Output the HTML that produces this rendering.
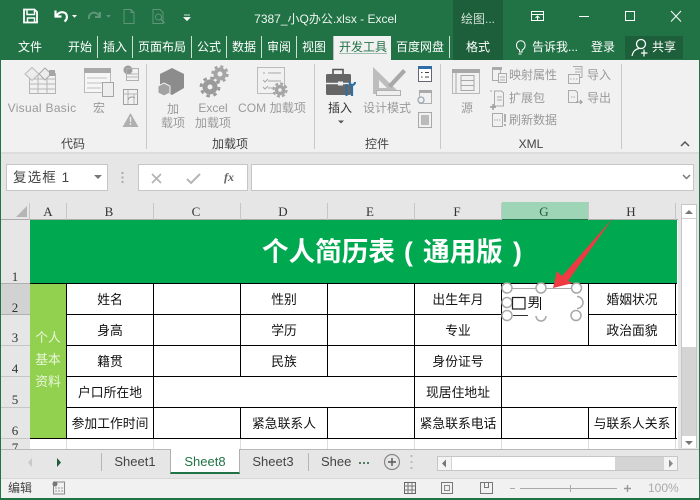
<!DOCTYPE html>
<html><head><meta charset="utf-8"><style>
html,body{margin:0;padding:0;width:700px;height:500px;overflow:hidden;background:#217346}
*{box-sizing:border-box}
#p{position:relative;width:700px;height:500px;overflow:hidden;font-family:"Liberation Sans","Noto Sans CJK SC",sans-serif;font-size:12px;color:#222}
.a{position:absolute}
.t{position:absolute;white-space:nowrap;text-align:center;line-height:16px}
.w{color:#fff}.g{color:#9a9a9a}.d{color:#444}
.h{position:absolute;top:203px;height:17px;font:13px/17px "Liberation Serif",serif;text-align:center;color:#333}
.r{position:absolute;left:1px;width:28px;text-align:center;font:13px/16px "Liberation Serif",serif;color:#333}
.c{position:absolute;text-align:center;font-size:12.8px;line-height:33px;color:#111;white-space:nowrap}
.l{position:absolute;background:#000}
.sep{position:absolute;width:1px;background:#c8c8c8}
.tb{position:absolute;top:38px;height:20px;line-height:19px;font-size:12px;color:#fff;text-align:center;white-space:nowrap}
.ti{position:absolute;top:221px;height:63px;line-height:63px;color:#fff;font-weight:bold;font-size:26.6px;white-space:nowrap}
</style></head><body><div id="p">

<!-- ribbon background -->
<div class="a" style="left:1px;top:60px;width:698px;height:93px;background:#f1f1f1"></div>
<div class="a" style="left:1px;top:153px;width:698px;height:50px;background:#e6e6e6"></div>
<div class="a" style="left:1px;top:152px;width:698px;height:2px;background:#dcdcdc"></div>

<!-- title bar -->
<div class="a" style="left:453px;top:0;width:50px;height:60px;background:#1c5f3a"></div>
<div class="a" style="left:625px;top:36px;width:58px;height:23px;background:#1c5f3a"></div>
<div class="t" style="left:253px;top:11px;width:145px;font-size:12px;color:#fff;opacity:.92">7387_小Q办公.xlsx - Excel</div>
<div class="t" style="left:458px;top:11px;width:40px;color:#cfe0d6;font-size:12px">绘图...</div>

<svg class="a" style="left:0;top:0" width="700" height="60" fill="none">
<path d="M24 9.500h10.500l2.500 2.500v10.500h-13z" stroke="#fff" stroke-width="1.800"/>
<path d="M27 10v4.500h7.500V10M27.500 22.500v-4.500h7v4.500" stroke="#fff" stroke-width="1.500"/>
<path d="M55.500 10.500v6h6M56 16c2-3 5-4.500 8-3.500 3.500 1 4 6.500.5 9" stroke="#fff" stroke-width="2.200"/>
<path d="M72 15h5l-2.500 2.800z" fill="#fff"/>
<path d="M100 12v5h-5M99.500 16c-2-3-5-4-7.500-3-2.500 1-3.500 3.500-3 6" stroke="#5f9578" stroke-width="2"/>
<path d="M106 15h5l-2.500 2.800z" fill="#5f9578"/>
<path d="M124 9.500h7l3 3v11h-10zM131 9.500v3h3" stroke="#5f9578"/>
<path d="M153 9.500h7l3 3v11h-10z" stroke="#5f9578"/><circle cx="158.500" cy="17" r="3" stroke="#5f9578"/><path d="M161 19.500l3.500 3.500" stroke="#5f9578" stroke-width="1.400"/>
<path d="M184 15h6M184 17.500h6l-3 3z" stroke="#fff" fill="#fff" stroke-width=".8"/>
<path d="M531.500 11.500h12v9h-12zM531.500 14.500h12M537.500 20v-4M535.500 18l2-2 2 2" stroke="#fff"/>
<path d="M579 16.500h10" stroke="#fff"/>
<rect x="625.500" y="11.500" width="9" height="9" stroke="#fff"/>
<path d="M671 11l10 10.500M681 11l-10 10.500" stroke="#fff"/>
<path d="M519.500 52v-2c-2-1-3-3-3-5a4.300 4.300 0 0 1 8.600 0c0 2-1 4-3 5v2zM518.500 54h3" stroke="#fff"/>
<circle cx="641" cy="44" r="4.500" stroke="#fff" stroke-width="1.300"/>
<path d="M632 56c1-5 4-7 7-7.500M644 49.500v7M641 53h6.500" stroke="#fff" stroke-width="1.200"/>
</svg>

<!-- tabs -->
<div class="tb" style="left:10px;width:40px">文件</div>
<div class="tb" style="left:64px;width:32px">开始</div>
<div class="tb" style="left:99px;width:32px">插入</div>
<div class="tb" style="left:134px;width:56px">页面布局</div>
<div class="tb" style="left:193px;width:32px">公式</div>
<div class="tb" style="left:228px;width:32px">数据</div>
<div class="tb" style="left:263px;width:32px">审阅</div>
<div class="tb" style="left:298px;width:32px">视图</div>
<div class="a" style="left:333px;top:36px;width:58px;height:24px;background:#f1f1f1;border-left:1px solid #bbb"></div>
<div class="tb" style="left:335px;width:56px;color:#217346;text-decoration:underline;text-decoration-color:#9fbfac;text-underline-offset:2px">开发工具</div>
<div class="tb" style="left:395px;width:50px">百度网盘</div>
<div class="tb" style="left:458px;width:40px">格式</div>
<div class="tb" style="left:530px;width:50px;color:#fff">告诉我...</div>
<div class="tb" style="left:588px;width:30px">登录</div>
<div class="tb" style="left:650px;width:28px">共享</div>
<div class="a" style="left:97px;top:36px;width:1px;height:22px;background:#cfe0d6"></div>
<div class="a" style="left:132px;top:36px;width:1px;height:22px;background:#cfe0d6"></div>
<div class="a" style="left:191px;top:36px;width:1px;height:22px;background:#cfe0d6"></div>
<div class="a" style="left:226px;top:36px;width:1px;height:22px;background:#cfe0d6"></div>
<div class="a" style="left:261px;top:36px;width:1px;height:22px;background:#cfe0d6"></div>
<div class="a" style="left:296px;top:36px;width:1px;height:22px;background:#cfe0d6"></div>
<div class="a" style="left:449px;top:36px;width:1px;height:22px;background:#cfe0d6"></div>

<!-- ribbon separators -->
<div class="sep" style="left:146px;top:64px;height:85px"></div>
<div class="sep" style="left:314px;top:64px;height:85px"></div>
<div class="sep" style="left:440px;top:64px;height:85px"></div>
<div class="sep" style="left:621px;top:64px;height:85px"></div>

<!-- ribbon icons -->
<svg class="a" style="left:0;top:60px" width="700" height="93" fill="none">
<!-- VB -->
<path d="M29.500 13.500h26v20h-26zM29.500 19h26M29.500 24h26M29.500 29h26M38 13.500v20M47 13.500v20" stroke="#b5b5b5"/>
<path d="M25 14l7-6.500 7 6.500-7 6.500z" fill="#ececec" stroke="#b8b8b8"/>
<path d="M39 14l6-6 6 6-6 6z" fill="#ececec" stroke="#a8a8a8"/>
<rect x="49" y="10" width="6" height="6" fill="#a5a5a5"/>
<!-- macro -->
<rect x="84.500" y="8.500" width="26" height="24" fill="#f6f6f6" stroke="#bbb"/>
<rect x="84" y="8" width="27" height="5" fill="#a9a9a9"/>
<path d="M87 18h20M87 23h20M87 28h14" stroke="#c0c0c0"/>
<rect x="102.500" y="22.500" width="11" height="14" fill="#eee" stroke="#a5a5a5"/>
<circle cx="128" cy="10" r="4.500" fill="#9c9c9c"/>
<rect x="126.500" y="8.500" width="12" height="12" stroke="#b0b0b0"/>
<path d="M127 14h12M127 17h12" stroke="#b5b5b5"/>
<rect x="123.500" y="29.500" width="14" height="15" stroke="#a0a0a0"/>
<path d="M124 34h14M128 30v14M134 34v10" stroke="#b5b5b5"/>
<path d="M128 40c1-3 4-4 7-2" stroke="#999"/>
<path d="M130.500 53l8 14h-16z" fill="#b0b0b0"/><path d="M130.500 57v5M130.500 63v2" stroke="#eee" stroke-width="1.300"/>
<!-- add-in -->
<path d="M172 8l12 6v14l-12 7-12-7V14z" fill="#8c8c8c"/>
<path d="M164 23l6 3v7l-6 3-6-3v-7z" fill="#a2a2a2" stroke="#f1f1f1"/>
<!-- gears -->
<circle cx="220" cy="14" r="4.500" stroke="#a5a5a5" stroke-width="4"/>
<circle cx="220" cy="14" r="7.500" stroke="#a5a5a5" stroke-width="2.500" stroke-dasharray="3 2.900"/>
<circle cx="210" cy="27" r="5" stroke="#9a9a9a" stroke-width="5"/>
<circle cx="210" cy="27" r="9" stroke="#9a9a9a" stroke-width="2.800" stroke-dasharray="3.500 3.560"/>
<!-- COM -->
<path d="M257.500 7.500h27v26h-27z" stroke="#bbb"/>
<path d="M263 13h2M268 13h13M263 20l2 2 3-3M268 21h13M263 27l2 2 3-3M268 28h6" stroke="#a8a8a8"/>
<circle cx="280" cy="30" r="3.500" stroke="#a5a5a5" stroke-width="3.500"/>
<circle cx="280" cy="30" r="6.500" stroke="#a5a5a5" stroke-width="2.200" stroke-dasharray="3 2.100"/>
<!-- Insert toolbox -->
<path d="M333 14V9.500h10V14" stroke="#555" stroke-width="1.600"/>
<rect x="326" y="14" width="25" height="21" rx="1.500" fill="#666"/>
<path d="M326 23.500h25" stroke="#f1f1f1" stroke-width="1.500"/>
<rect x="338" y="21.500" width="5" height="4" fill="#eee"/>
<path d="M349.500 22c0 4 5.500 4 5.500 0M352 25v11" stroke="#2a6fa8" stroke-width="2.200"/>
<path d="M346.500 24v12" stroke="#2a6fa8" stroke-width="2"/>
<!-- design -->
<path d="M373 7l28 27h-28z" fill="#bdbdbd"/>
<path d="M379 20l8 8h-8z" fill="#f1f1f1"/>
<path d="M388 25l15-16 3 3-15 16z" fill="#a8a8a8"/>
<rect x="376.500" y="30.500" width="24" height="5" fill="#eee" stroke="#b0b0b0"/>
<!-- small controls -->
<rect x="418.500" y="6.500" width="13" height="15" fill="#fff" stroke="#667"/>
<rect x="418" y="6" width="14" height="3" fill="#2f6da8"/>
<path d="M421 12.500h1.500M425 12.500h4M421 17h1.500M425 17h4" stroke="#444"/>
<rect x="419.500" y="30.500" width="12" height="13" stroke="#b0b0b0"/><rect x="419" y="30" width="13" height="3" fill="#aaa"/>
<circle cx="421" cy="40" r="3" fill="#f1f1f1" stroke="#9aaab5" stroke-width="1.300"/>
<rect x="418.500" y="52.500" width="13" height="15" stroke="#a8a8a8"/><rect x="421" y="55" width="8" height="10" fill="#bbb"/>
<!-- source -->
<rect x="452.500" y="9.500" width="27" height="24" stroke="#b8b8b8"/><rect x="452" y="9" width="28" height="4" fill="#a8a8a8"/>
<path d="M456 9v24M461 15.500h13v5h-13zM461 20.500h13v5h-13zM461 25.500h13v5h-13z" stroke="#a8a8a8"/>
<!-- xml small -->
<rect x="492.500" y="7.500" width="8" height="13" stroke="#aaa"/><rect x="492" y="7" width="10" height="3" fill="#aaa"/>
<rect x="498.500" y="13.500" width="8" height="9" fill="#f1f1f1" stroke="#aaa"/><path d="M500 17h5M500 20h5" stroke="#aaa"/>
<rect x="568.500" y="14.500" width="11" height="9" stroke="#aaa"/><path d="M573 6.500h9v11h-2" stroke="#aaa"/><path d="M570 19h8" stroke="#aaa" stroke-dasharray="1.500 1.500"/><path d="M575 9h6M575 12h6" stroke="#aaa"/>
<path d="M494.500 31h7l2 2v13h-9z" stroke="#aaa"/><path d="M490 31h2" stroke="#aaa"/><path d="M497 37h5M497 40h5" stroke="#aaa"/><path d="M490 47h6M493 44v6" stroke="#999" stroke-width="1.400"/>
<path d="M568.500 30.500h7l2 2v10h-9z" stroke="#aaa"/><path d="M571 37h5" stroke="#aaa" stroke-dasharray="1.500 1"/><path d="M576 42h6l-2-2M582 42l-2 2" stroke="#999"/>
<rect x="492.500" y="53.500" width="10" height="13" stroke="#aaa"/><path d="M494 60h7" stroke="#aaa" stroke-dasharray="1.500 1"/><path d="M505 54v8M505 64v2" stroke="#999" stroke-width="1.500"/>
<!-- collapse + dropdown -->
<path d="M681 86l4-4 4 4" stroke="#555" stroke-width="1.500"/>
<path d="M338 60.500h6l-3 3z" fill="#555"/>
</svg>

<!-- ribbon text -->
<div class="t g" style="left:2px;top:100px;width:80px;font-size:12px;letter-spacing:.3px">Visual Basic</div>
<div class="t g" style="left:88px;top:100px;width:22px">宏</div>
<div class="t g" style="left:158px;top:101px;width:30px">加</div>
<div class="t g" style="left:158px;top:115px;width:30px">载项</div>
<div class="t g" style="left:192px;top:100px;width:42px">Excel</div>
<div class="t g" style="left:192px;top:115px;width:42px">加载项</div>
<div class="t g" style="left:236px;top:100px;width:72px;letter-spacing:.1px">COM 加载项</div>
<div class="t" style="left:325px;top:100px;width:30px;color:#333">插入</div>
<div class="t g" style="left:361px;top:100px;width:52px">设计模式</div>
<div class="t g" style="left:455px;top:100px;width:24px">源</div>
<div class="t g" style="left:508px;top:67px;width:50px">映射属性</div>
<div class="t g" style="left:586px;top:67px;width:26px">导入</div>
<div class="t g" style="left:508px;top:90px;width:38px">扩展包</div>
<div class="t g" style="left:586px;top:90px;width:26px">导出</div>
<div class="t g" style="left:508px;top:112px;width:50px">刷新数据</div>
<div class="t d" style="left:58px;top:136px;width:30px">代码</div>
<div class="t d" style="left:210px;top:136px;width:40px">加载项</div>
<div class="t d" style="left:362px;top:136px;width:30px">控件</div>
<div class="t d" style="left:510px;top:136px;width:42px">XML</div>

<!-- formula bar -->
<div class="a" style="left:6px;top:164px;width:102px;height:27px;background:#fff;border:1px solid #c6c6c6"></div>
<div class="t" style="left:13px;top:170px;font-size:13.500px;color:#444;letter-spacing:1.100px">复选框 1</div>
<svg class="a" style="left:0;top:155px" width="700" height="50" fill="none">
<path d="M94 20h8l-4 4z" fill="#777"/>
<path d="M122.500 17v2M122.500 21.500v2M122.500 26v2" stroke="#aaa" stroke-width="2"/>
</svg>
<div class="a" style="left:138px;top:164px;width:110px;height:27px;background:#fff;border:1px solid #c6c6c6"></div>
<svg class="a" style="left:0;top:155px" width="700" height="50" fill="none">
<path d="M152 19l9 9M161 19l-9 9" stroke="#b5b5b5" stroke-width="1.800"/>
<path d="M187 24l4 4 9-9" stroke="#b5b5b5" stroke-width="2"/>
</svg>
<div class="t" style="left:222px;top:169px;width:14px;font:italic bold 12px/16px 'Liberation Serif',serif;color:#666">fx</div>
<div class="a" style="left:251px;top:164px;width:443px;height:27px;background:#fff;border:1px solid #c6c6c6"></div>
<svg class="a" style="left:680px;top:172px" width="14" height="12" fill="none"><path d="M3 3l3.500 3.500L10 3" stroke="#777" stroke-width="1.500"/></svg>

<!-- grid base -->
<div class="a" style="left:1px;top:203px;width:680px;height:246px;background:#e6e6e6"></div>
<div class="a" style="left:30px;top:220px;width:648px;height:229px;background:#fff"></div>
<div class="a" style="left:1px;top:219px;width:677px;height:1px;background:#ababab"></div>
<div class="a" style="left:502px;top:202px;width:87px;height:18px;background:#9fd5b7;border-bottom:1px solid #217346"></div>
<svg class="a" style="left:15px;top:205px" width="13" height="13"><path d="M12 1v11H1z" fill="#b5b5b5"/></svg>
<!-- header ticks -->
<div class="a" style="left:29px;top:203px;width:1px;height:17px;background:#c6c6c6"></div>
<div class="a" style="left:66px;top:203px;width:1px;height:17px;background:#c6c6c6"></div>
<div class="a" style="left:153px;top:203px;width:1px;height:17px;background:#c6c6c6"></div>
<div class="a" style="left:240px;top:203px;width:1px;height:17px;background:#c6c6c6"></div>
<div class="a" style="left:327px;top:203px;width:1px;height:17px;background:#c6c6c6"></div>
<div class="a" style="left:414px;top:203px;width:1px;height:17px;background:#c6c6c6"></div>
<div class="a" style="left:501px;top:203px;width:1px;height:17px;background:#c6c6c6"></div>
<div class="a" style="left:588px;top:203px;width:1px;height:17px;background:#c6c6c6"></div>
<div class="a" style="left:675px;top:203px;width:1px;height:17px;background:#c6c6c6"></div>
<div class="h" style="left:30px;width:36px">A</div>
<div class="h" style="left:66px;width:86px">B</div>
<div class="h" style="left:153px;width:86px">C</div>
<div class="h" style="left:240px;width:86px">D</div>
<div class="h" style="left:327px;width:86px">E</div>
<div class="h" style="left:414px;width:86px">F</div>
<div class="h" style="left:501px;width:86px;color:#1f5c3a">G</div>
<div class="h" style="left:588px;width:86px">H</div>

<!-- row headers -->
<div class="a" style="left:1px;top:283px;width:29px;height:31px;background:#d2d2d2"></div>
<div class="a" style="left:1px;top:283px;width:29px;height:1px;background:#b0b0b0"></div>
<div class="a" style="left:1px;top:314px;width:29px;height:1px;background:#b0b0b0"></div>
<div class="a" style="left:1px;top:345px;width:29px;height:1px;background:#c6c6c6"></div>
<div class="a" style="left:1px;top:376px;width:29px;height:1px;background:#c6c6c6"></div>
<div class="a" style="left:1px;top:407px;width:29px;height:1px;background:#c6c6c6"></div>
<div class="a" style="left:1px;top:438px;width:29px;height:1px;background:#c6c6c6"></div>
<div class="r" style="top:269px">1</div>
<div class="r" style="top:300px">2</div>
<div class="r" style="top:330px">3</div>
<div class="r" style="top:361px">4</div>
<div class="r" style="top:392px">5</div>
<div class="r" style="top:423px">6</div>

<!-- title -->
<div class="a" style="left:30px;top:220px;width:647px;height:63px;background:#00a94f"></div>
<div class="ti" style="left:262px">个人简历表</div>
<div class="ti" style="left:404px">(</div>
<div class="ti" style="left:423px">通用版</div>
<div class="ti" style="left:513px">)</div>

<!-- side label -->
<div class="a" style="left:30px;top:283px;width:37px;height:155px;background:#92d050"></div>
<div class="t" style="left:30px;top:327px;width:36px;font-size:12.800px;line-height:22px;color:#e9f6d8">个人<br>基本<br>资料</div>

<!-- light gridlines row 7 -->
<div class="a" style="left:66px;top:438px;width:1px;height:11px;background:#dcdcdc"></div>
<div class="a" style="left:153px;top:438px;width:1px;height:11px;background:#dcdcdc"></div>
<div class="a" style="left:240px;top:438px;width:1px;height:11px;background:#dcdcdc"></div>
<div class="a" style="left:327px;top:438px;width:1px;height:11px;background:#dcdcdc"></div>
<div class="a" style="left:414px;top:438px;width:1px;height:11px;background:#dcdcdc"></div>
<div class="a" style="left:501px;top:438px;width:1px;height:11px;background:#dcdcdc"></div>
<div class="a" style="left:588px;top:438px;width:1px;height:11px;background:#dcdcdc"></div>
<div class="a" style="left:675px;top:438px;width:1px;height:11px;background:#dcdcdc"></div>
<div class="r" style="top:441px;height:8px;overflow:hidden;line-height:14px">7</div>

<!-- black table lines -->
<div class="l" style="left:30px;top:283px;width:647px;height:1px"></div>
<div class="l" style="left:67px;top:314px;width:610px;height:1px"></div>
<div class="l" style="left:67px;top:345px;width:610px;height:1px"></div>
<div class="l" style="left:67px;top:376px;width:610px;height:1px"></div>
<div class="l" style="left:67px;top:407px;width:610px;height:1px"></div>
<div class="l" style="left:30px;top:438px;width:647px;height:1px"></div>
<div class="l" style="left:66px;top:283px;width:1px;height:155px"></div>
<div class="l" style="left:153px;top:283px;width:1px;height:155px"></div>
<div class="l" style="left:240px;top:283px;width:1px;height:94px"></div>
<div class="l" style="left:240px;top:407px;width:1px;height:31px"></div>
<div class="l" style="left:327px;top:283px;width:1px;height:94px"></div>
<div class="l" style="left:327px;top:407px;width:1px;height:31px"></div>
<div class="l" style="left:414px;top:283px;width:1px;height:155px"></div>
<div class="l" style="left:501px;top:283px;width:1px;height:155px"></div>
<div class="l" style="left:588px;top:283px;width:1px;height:63px"></div>
<div class="l" style="left:588px;top:407px;width:1px;height:31px"></div>
<div class="l" style="left:675px;top:283px;width:1px;height:63px"></div>
<div class="l" style="left:675px;top:407px;width:1px;height:31px"></div>

<!-- cells -->
<div class="c" style="left:67px;top:283px;width:86px">姓名</div>
<div class="c" style="left:241px;top:283px;width:86px">性别</div>
<div class="c" style="left:415px;top:283px;width:86px">出生年月</div>
<div class="c" style="left:589px;top:283px;width:86px">婚姻状况</div>
<div class="c" style="left:67px;top:314px;width:86px">身高</div>
<div class="c" style="left:241px;top:314px;width:86px">学历</div>
<div class="c" style="left:415px;top:314px;width:86px">专业</div>
<div class="c" style="left:589px;top:314px;width:86px">政治面貌</div>
<div class="c" style="left:67px;top:345px;width:86px">籍贯</div>
<div class="c" style="left:241px;top:345px;width:86px">民族</div>
<div class="c" style="left:415px;top:345px;width:86px">身份证号</div>
<div class="c" style="left:67px;top:376px;width:86px">户口所在地</div>
<div class="c" style="left:415px;top:376px;width:86px">现居住地址</div>
<div class="c" style="left:67px;top:407px;width:86px">参加工作时间</div>
<div class="c" style="left:241px;top:407px;width:86px">紧急联系人</div>
<div class="c" style="left:415px;top:407px;width:86px">紧急联系电话</div>
<div class="c" style="left:589px;top:407px;width:86px">与联系人关系</div>

<!-- checkbox selection -->
<div class="a" style="left:502px;top:284px;width:86px;height:38px;background:#fff"></div>
<svg class="a" style="left:495px;top:275px" width="100" height="55" fill="none">
<path d="M12 13.500h69" stroke="#a8a8a8"/>
<path d="M18 40.500h15" stroke="#333"/>
<circle cx="12" cy="13" r="5" fill="#fff" stroke="#a8a8a8" stroke-width="1.500"/>
<circle cx="12" cy="27.500" r="5" fill="#fff" stroke="#a8a8a8" stroke-width="1.500"/>
<circle cx="12" cy="40.500" r="5" fill="#fff" stroke="#a8a8a8" stroke-width="1.500"/>
<circle cx="46" cy="13" r="5" fill="#fff" stroke="#a8a8a8" stroke-width="1.500"/>
<path d="M41 41a5 5 0 0 0 10 0" stroke="#a8a8a8" stroke-width="1.500"/>
<circle cx="81.500" cy="13" r="5" fill="#fff" stroke="#a8a8a8" stroke-width="1.500"/>
<circle cx="81" cy="40.500" r="5" fill="#fff" stroke="#a8a8a8" stroke-width="1.500"/>
<path d="M82 21.500a5.500 5.500 0 0 1 0 12" stroke="#a8a8a8" stroke-width="1.500"/>
<rect x="17.500" y="22.500" width="12.500" height="11.500" fill="#fff" stroke="#222" stroke-width="1.200"/>
<path d="M45.500 22v13" stroke="#111"/>
</svg>
<div class="t" style="left:527.500px;top:295px;font-size:12.800px;color:#111">男</div>
<!-- arrow -->
<svg class="a" style="left:540px;top:210px" width="90" height="80"><path d="M73 8L28 71l5 2-20 5 4-17 5 5z" fill="#ee3a42"/></svg>

<!-- vertical scrollbar -->
<div class="a" style="left:681px;top:203px;width:18px;height:246px;background:#e6e6e6"></div>
<div class="a" style="left:681px;top:204px;width:16px;height:244px;background:#d4d4d4;border:1px solid #c6c6c6"></div>
<div class="a" style="left:682px;top:205px;width:14px;height:142px;background:#fff"></div>
<div class="a" style="left:682px;top:218px;width:14px;height:1px;background:#d0d0d0"></div>
<div class="a" style="left:682px;top:436px;width:14px;height:12px;background:#fff"></div>
<svg class="a" style="left:682px;top:205px" width="14" height="244"><path d="M3 9h8l-4-4z" fill="#777"/><path d="M3 236h8l-4 4z" fill="#777"/></svg>

<!-- tab bar -->
<div class="a" style="left:1px;top:449px;width:698px;height:29px;background:#e6e6e6;border-top:1px solid #b8b8b8"></div>
<svg class="a" style="left:20px;top:456px" width="50" height="14"><path d="M12 2v9l-4-4.500z" fill="#c8c8c8"/><path d="M37 2v9l4-4.500z" fill="#1f5c3a"/></svg>
<div class="a" style="left:101px;top:453px;width:1px;height:18px;background:#b5b5b5"></div>
<div class="t d" style="left:101px;top:454px;width:68px;font-size:13px">Sheet1</div>
<div class="a" style="left:170px;top:449px;width:70px;height:25px;background:#fff;border-left:1px solid #b0b0b0;border-right:1px solid #b0b0b0;border-bottom:2px solid #217346"></div>
<div class="t" style="left:170px;top:454px;width:70px;font-size:13px;color:#217346">Sheet8</div>
<div class="t d" style="left:239px;top:454px;width:68px;font-size:13px">Sheet3</div>
<div class="a" style="left:308px;top:453px;width:1px;height:18px;background:#b5b5b5"></div>
<div class="t d" style="left:321px;top:454px;font-size:13px">Shee</div>
<svg class="a" style="left:355px;top:452px" width="60" height="22" fill="none">
<path d="M4 11h2M8 11h2M12 11h2" stroke="#1f5c3a" stroke-width="1.500"/>
<circle cx="37" cy="10" r="7.500" stroke="#888" stroke-width="1.200"/>
<path d="M33 10h8M37 6v8" stroke="#555" stroke-width="1.400"/>
<path d="M56.500 3v2M56.500 9v2M56.500 15v2" stroke="#bbb" stroke-width="2"/>
</svg>
<!-- h scrollbar -->
<div class="a" style="left:437px;top:456px;width:241px;height:15px;background:#d4d4d4;border:1px solid #c6c6c6"></div>
<div class="a" style="left:438px;top:457px;width:13px;height:13px;background:#f4f4f4"></div>
<div class="a" style="left:452px;top:457px;width:163px;height:13px;background:#fff"></div>
<div class="a" style="left:664px;top:457px;width:13px;height:13px;background:#f4f4f4"></div>
<svg class="a" style="left:438px;top:457px" width="240" height="13"><path d="M8 2.500v8l-4-4z" fill="#777"/><path d="M231 2.500v8l4-4z" fill="#888"/></svg>

<!-- status bar -->
<div class="a" style="left:1px;top:478px;width:698px;height:20px;background:#f1f1f1;border-top:1px solid #d8d8d8"></div>
<div class="t d" style="left:8px;top:480px;font-size:12px">编辑</div>
<svg class="a" style="left:0;top:478px" width="700" height="20" fill="none">
<rect x="53.500" y="4" width="11" height="12" fill="#f1f1f1" stroke="#888"/><circle cx="55" cy="6" r="2.500" fill="#777"/><path d="M55 10h8M55 13h8" stroke="#999" stroke-dasharray="2 1"/>
<rect x="404.500" y="4.500" width="11" height="11" stroke="#666"/><path d="M404.500 8h11M404.500 12h11M408 4.500v11M412 4.500v11" stroke="#777"/>
<rect x="441.500" y="4.500" width="11" height="11" stroke="#777"/><rect x="444.500" y="7.500" width="5" height="5" stroke="#888"/>
<path d="M480.500 4.500h12v11h-12zM484.500 4.500v5h4v-5" stroke="#777"/>
<path d="M510 10.500h5M520 10.500h97" stroke="#aaa"/><path d="M570.500 7v7" stroke="#aaa"/>
<path d="M624 10.500h7M627.500 7v7" stroke="#999" stroke-width="1.400"/>
</svg>
<div class="t" style="left:648px;top:480px;font-size:12px;color:#aaa">100%</div>

<!-- window frame -->
<div class="a" style="left:0;top:60px;width:1px;height:440px;background:#217346"></div>
<div class="a" style="left:699px;top:60px;width:1px;height:440px;background:#217346"></div>
<div class="a" style="left:0;top:498px;width:700px;height:2px;background:#217346"></div>
</div></body></html>
